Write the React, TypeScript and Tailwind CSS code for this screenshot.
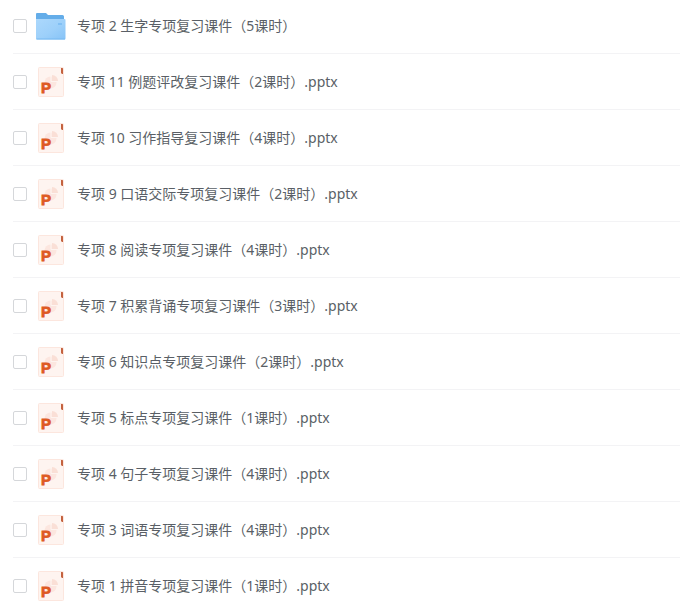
import React from 'react';

type FileItem = {
    name: string;
    kind: 'folder' | 'pptx';
};

const files: FileItem[] = [
    { name: '专项 2 生字专项复习课件（5课时）', kind: 'folder' },
    { name: '专项 11 例题评改复习课件（2课时）.pptx', kind: 'pptx' },
    { name: '专项 10 习作指导复习课件（4课时）.pptx', kind: 'pptx' },
    { name: '专项 9 口语交际专项复习课件（2课时）.pptx', kind: 'pptx' },
    { name: '专项 8 阅读专项复习课件（4课时）.pptx', kind: 'pptx' },
    { name: '专项 7 积累背诵专项复习课件（3课时）.pptx', kind: 'pptx' },
    { name: '专项 6 知识点专项复习课件（2课时）.pptx', kind: 'pptx' },
    { name: '专项 5 标点专项复习课件（1课时）.pptx', kind: 'pptx' },
    { name: '专项 4 句子专项复习课件（4课时）.pptx', kind: 'pptx' },
    { name: '专项 3 词语专项复习课件（4课时）.pptx', kind: 'pptx' },
    { name: '专项 1 拼音专项复习课件（1课时）.pptx', kind: 'pptx' },
];

function FolderIcon() {
    return (
        <svg viewBox="0 0 32 32" className="size-8 shrink-0" aria-hidden="true">
            <defs>
                <linearGradient id="folder-front" x1="0" y1="0" x2="1" y2="1">
                    <stop offset="0" stopColor="#acd8fc" />
                    <stop offset="0.55" stopColor="#9dd0fa" />
                    <stop offset="1" stopColor="#86c3f7" />
                </linearGradient>
            </defs>
            <path d="M1 4a1 1 0 0 1 1-1h9l2 2h14.500a1.500 1.500 0 0 1 1.500 1.500V12H1z" fill="#64ade9" />
            <path d="M1 9h28.500a1 1 0 0 1 1 1v18.500a1 1 0 0 1-1 1H2a1 1 0 0 1-1-1z" fill="url(#folder-front)" />
            <path d="M1.500 29h28.500" stroke="#76b9f1" />
            <rect x="23" y="13" width="4" height="2" fill="#82c0f4" />
        </svg>
    );
}

function PptIcon() {
    return (
        <svg viewBox="0 0 32 32" className="size-8 shrink-0" aria-hidden="true">
            <rect x="3.500" y="1.500" width="25" height="29" rx="1" fill="#fef4f0" stroke="#fce6de" />
            <circle cx="15.500" cy="16.500" r="6" fill="#fce6df" />
            <path d="M17 15V9a6 6 0 0 1 6 6z" fill="#fadfd6" />
            <path d="M16 9v6.500h6.500" fill="none" stroke="#fef4f0" />
            <path d="M26 2h1.500a.5.5 0 0 1 .5.5V8h-1l-1-1z" fill="#c4623f" />
            <text
                x="6"
                y="27"
                fill="#de5a24"
                stroke="#de5a24"
                strokeWidth="0.8"
                fontFamily="Liberation Sans, sans-serif"
                fontSize="15"
                fontWeight="700"
            >
                P
            </text>
        </svg>
    );
}

function FileRow({ file, id }: { file: FileItem; id: string }) {
    return (
        <li className="flex h-14 items-center border-b border-[#f3f3f5] first:h-[54px] first:pb-0.5">
            <input
                id={id}
                type="checkbox"
                className="size-3.5 shrink-0 appearance-none rounded-xs border border-[#d5d7da] bg-white checked:border-blue-500 checked:bg-blue-500"
            />
            <label htmlFor={id} className="ml-2 flex min-w-0 items-center gap-2.5">
                {file.kind === 'folder' ? <FolderIcon /> : <PptIcon />}
                <span className="truncate text-sm text-[#5a5f66]">{file.name}</span>
            </label>
        </li>
    );
}

export default function App() {
    return (
        <main className="h-screen overflow-hidden bg-white pr-0.5 pl-[13px] font-['Noto_Sans','Noto_Sans_CJK_SC',sans-serif]">
            <ul>
                {files.map((file, index) => (
                    <FileRow key={file.name} file={file} id={`file-${index}`} />
                ))}
            </ul>
        </main>
    );
}
